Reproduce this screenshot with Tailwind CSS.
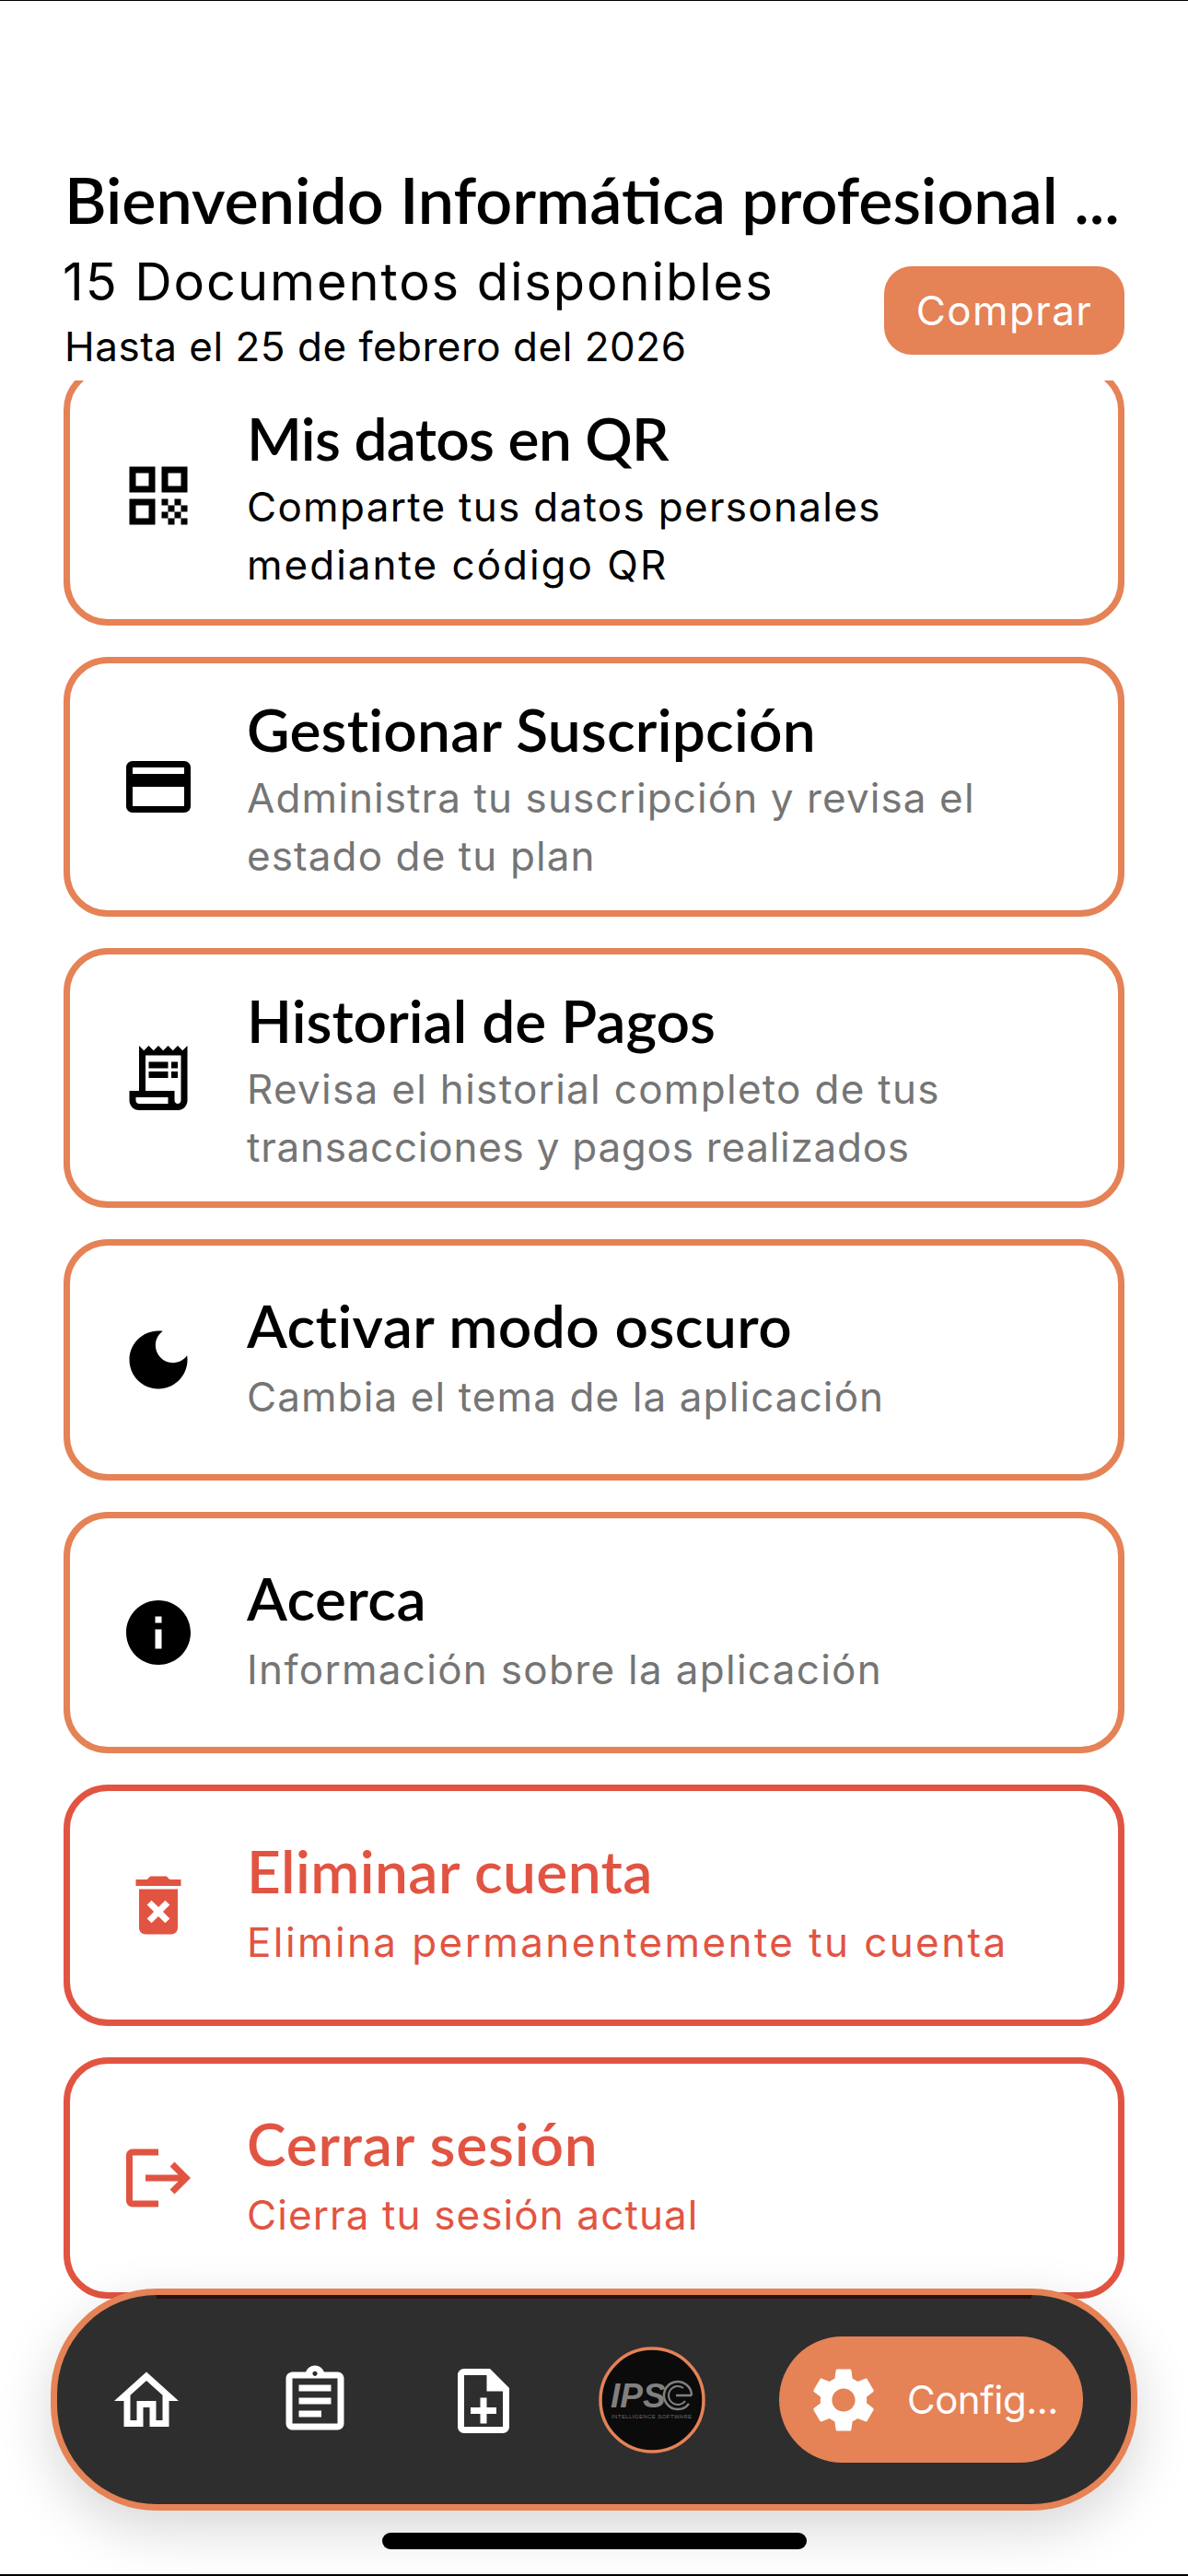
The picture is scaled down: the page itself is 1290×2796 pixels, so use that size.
<!DOCTYPE html>
<html lang="es">
<head>
    <meta charset="UTF-8">
    <meta name="viewport" content="width=1290">
    <title>Configuración</title>
    <script src="https://cdn.jsdelivr.net/npm/@tailwindcss/browser@4"></script>
</head>
<body class="bg-white">
    <div class="relative w-[1290px] h-[2796px] overflow-hidden bg-white border-t border-b-2 border-black flex flex-col">
      <!-- Header -->
      <header class="h-[412px] shrink-0 pl-[70px] pr-[69px] pt-[175px]">
        <h1 class="font-[Lato,sans-serif] font-semibold text-[70px] leading-[80px] text-black whitespace-nowrap">Bienvenido Informática profesional ...</h1>
        <div class="flex justify-between items-start">
          <div class="font-[Inter,sans-serif] text-black">
            <p class="mt-[16px] text-[56px] leading-[68px] -ml-[2px] tracking-[1.9px]">15 Documentos disponibles</p>
            <p class="mt-[9px] text-[44px] leading-[54px] tracking-[0.5px]">Hasta el 25 de febrero del 2026</p>
          </div>
          <button class="mt-[33px] w-[261px] h-[96px] rounded-[30px] bg-[#e58256] text-white font-[Inter,sans-serif] text-[44px] tracking-[1.4px]">Comprar</button>
        </div>
      </header>

      <!-- Option list -->
      <main class="flex-1 overflow-hidden px-[69px]">
        <div class="flex flex-col gap-[34px] -mt-[16px]">
          <a class="flex items-center h-[282px] border-[7px] border-[#e58256] rounded-[48px] pl-[54px]">
            <svg class="w-[84px] h-[84px] shrink-0" viewBox="0 0 24 24" fill="#000"><path d="M3 11h8V3H3v8zm2-6h4v4H5V5zM3 21h8v-8H3v8zm2-6h4v4H5v-4zM13 3v8h8V3h-8zm6 6h-4V5h4v4zM19 19h2v2h-2zM13 13h2v2h-2zM15 15h2v2h-2zM13 17h2v2h-2zM15 19h2v2h-2zM17 17h2v2h-2zM17 13h2v2h-2zM19 15h2v2h-2z"/></svg>
            <div class="ml-[54px] pt-[9px]">
              <h2 class="font-[Lato,sans-serif] font-semibold text-[64px] leading-[72px] tracking-[-0.7px] mb-[7px] text-black">Mis datos en QR</h2>
              <p class="font-[Inter,sans-serif] text-[44px] leading-[63px] tracking-[1.3px] text-black">Comparte tus datos personales<br><span class="tracking-[2px]">mediante código QR</span></p>
            </div>
          </a>

          <a class="flex items-center h-[282px] border-[7px] border-[#e58256] rounded-[48px] pl-[54px]">
            <svg class="w-[84px] h-[84px] shrink-0" viewBox="0 0 24 24" fill="#000"><path d="M20 4H4c-1.11 0-1.99.89-1.99 2L2 18c0 1.11.89 2 2 2h16c1.11 0 2-.89 2-2V6c0-1.11-.89-2-2-2zm0 14H4v-6h16v6zm0-10H4V6h16v2z"/></svg>
            <div class="ml-[54px] pt-[9px]">
              <h2 class="font-[Lato,sans-serif] font-semibold text-[64px] leading-[72px] tracking-[0.2px] mb-[7px] text-black">Gestionar Suscripción</h2>
              <p class="font-[Inter,sans-serif] text-[44px] leading-[63px] tracking-[1.1px] text-[#757575]">Administra tu suscripción y revisa el<br>estado de tu plan</p>
            </div>
          </a>

          <a class="flex items-center h-[282px] border-[7px] border-[#e58256] rounded-[48px] pl-[54px]">
            <svg class="w-[84px] h-[84px] shrink-0" viewBox="0 0 24 24" fill="#000"><path d="M19.5 3.5L18 2l-1.5 1.5L15 2l-1.5 1.5L12 2l-1.5 1.5L9 2 7.5 3.5 6 2v14H3v3c0 1.66 1.34 3 3 3h12c1.66 0 3-1.34 3-3V2l-1.5 1.5zM15 20H6c-.55 0-1-.45-1-1v-1h10v2zm4-1c0 .55-.45 1-1 1s-1-.45-1-1v-3H8V5h11v14z"/><path d="M9 7h6v2H9zm7 0h2v2h-2zM9 10h6v2H9zm7 0h2v2h-2z"/></svg>
            <div class="ml-[54px] pt-[9px]">
              <h2 class="font-[Lato,sans-serif] font-semibold text-[64px] leading-[72px] mb-[7px] text-black">Historial de Pagos</h2>
              <p class="font-[Inter,sans-serif] text-[44px] leading-[63px] tracking-[1.3px] text-[#757575]">Revisa el historial completo de tus<br><span class="tracking-[0.75px]">transacciones y pagos realizados</span></p>
            </div>
          </a>

          <a class="flex items-center h-[262px] border-[7px] border-[#e58256] rounded-[48px] pl-[54px]">
            <svg class="w-[84px] h-[84px] shrink-0" viewBox="0 0 24 24" fill="#000"><path d="M12 3c-4.97 0-9 4.03-9 9s4.03 9 9 9 9-4.03 9-9c0-.46-.04-.92-.1-1.36-.98 1.37-2.58 2.26-4.4 2.26-2.98 0-5.4-2.42-5.4-5.4 0-1.81.89-3.42 2.26-4.4-.44-.06-.9-.1-1.36-.1z"/></svg>
            <div class="ml-[54px] pb-[1px]">
              <h2 class="font-[Lato,sans-serif] font-semibold text-[64px] leading-[72px] tracking-[0.4px] mb-[10px] text-black">Activar modo oscuro</h2>
              <p class="font-[Inter,sans-serif] text-[44px] leading-[63px] tracking-[1.1px] text-[#757575]">Cambia el tema de la aplicación</p>
            </div>
          </a>

          <a class="flex items-center h-[262px] border-[7px] border-[#e58256] rounded-[48px] pl-[54px]">
            <svg class="w-[84px] h-[84px] shrink-0" viewBox="0 0 24 24" fill="#000"><path d="M12 2C6.48 2 2 6.48 2 12s4.48 10 10 10 10-4.48 10-10S17.52 2 12 2zm1 15h-2v-6h2v6zm0-8h-2V7h2v2z"/></svg>
            <div class="ml-[54px] pb-[1px]">
              <h2 class="font-[Lato,sans-serif] font-semibold text-[64px] leading-[72px] tracking-[0.4px] mb-[10px] text-black">Acerca</h2>
              <p class="font-[Inter,sans-serif] text-[44px] leading-[63px] tracking-[1.3px] text-[#757575]">Información sobre la aplicación</p>
            </div>
          </a>

          <a class="flex items-center h-[262px] border-[7px] border-[#e25442] rounded-[48px] pl-[54px]">
            <svg class="w-[84px] h-[84px] shrink-0" viewBox="0 0 24 24" fill="#e25442"><path d="M6 19c0 1.1.9 2 2 2h8c1.1 0 2-.9 2-2V7H6v12zm2.46-7.12 1.41-1.41L12 12.59l2.12-2.12 1.41 1.41L13.41 14l2.12 2.12-1.41 1.41L12 15.41l-2.12 2.12-1.41-1.41L10.59 14l-2.13-2.12zM15.5 4l-1-1h-5l-1 1H5v2h14V4z"/></svg>
            <div class="ml-[54px] pb-[1px]">
              <h2 class="font-[Lato,sans-serif] font-semibold text-[64px] leading-[72px] tracking-[0.4px] mb-[10px] text-[#e25442]">Eliminar cuenta</h2>
              <p class="font-[Inter,sans-serif] text-[44px] leading-[63px] tracking-[2.4px] text-[#e25442]">Elimina permanentemente tu cuenta</p>
            </div>
          </a>

          <a class="flex items-center h-[262px] border-[7px] border-[#e25442] rounded-[48px] pl-[54px]">
            <svg class="w-[84px] h-[84px] shrink-0" viewBox="0 0 24 24" fill="#e25442"><path d="M17 7l-1.41 1.41L18.17 11H8v2h10.17l-2.58 2.58L17 17l5-5zM4 5h8V3H4c-1.1 0-2 .9-2 2v14c0 1.1.89 2 2 2h8v-2H4V5z"/></svg>
            <div class="ml-[54px] pb-[1px]">
              <h2 class="font-[Lato,sans-serif] font-semibold text-[64px] leading-[72px] tracking-[0.8px] mb-[10px] text-[#e25442]">Cerrar sesión</h2>
              <p class="font-[Inter,sans-serif] text-[44px] leading-[63px] tracking-[1.1px] text-[#e25442]">Cierra tu sesión actual</p>
            </div>
          </a>
        </div>
      </main>

      <!-- Floating bottom nav -->
      <nav class="absolute left-[55px] top-[2483px] w-[1180px] h-[241px] rounded-[115px] border-[7px] border-[#e58256] bg-[#2e2e2e] shadow-[0_20px_60px_rgba(0,0,0,0.16)] flex items-center pl-[55px]">
        <div class="absolute left-[108px] right-[108px] top-0 h-[4px] bg-[#241510]"></div>
        <svg class="w-[84px] h-[84px] shrink-0 mt-[2px]" viewBox="0 0 24 24" fill="#fff"><path d="M12 5.69l5 4.5V18h-2v-6H9v6H7v-7.81l5-4.5M12 3L2 12h3v8h6v-6h2v6h6v-8h3L12 3z"/></svg>
        <svg class="w-[84px] h-[84px] shrink-0 ml-[99px] mt-[2px]" viewBox="0 0 24 24" fill="#fff"><path d="M7 15h7v2H7zm0-4h10v2H7zm0-4h10v2H7zm12-4h-4.18C14.4 1.84 13.3 1 12 1c-1.3 0-2.4.84-2.82 2H5c-.14 0-.27.01-.4.04-.39.08-.74.28-1.01.55-.18.18-.33.4-.43.64-.1.23-.16.49-.16.77v14c0 .27.06.54.16.78s.25.45.43.64c.27.27.62.47 1.01.55.13.02.26.03.4.03h14c1.1 0 2-.9 2-2V5c0-1.1-.9-2-2-2zm-7-.25c.41 0 .75.34.75.75s-.34.75-.75.75-.75-.34-.75-.75.34-.75.75-.75zM19 19H5V5h14v14z"/></svg>
        <svg class="w-[84px] h-[84px] shrink-0 ml-[99px] mt-[2px]" viewBox="0 0 24 24" fill="#fff"><path d="M14 2H6c-1.1 0-2 .9-2 2v16c0 1.1.89 2 1.99 2H18c1.1 0 2-.9 2-2V8l-6-6zm4 18H6V4h7v5h5v11z"/><path d="M13 11h-2v3H8v2h3v3h2v-3h3v-2h-3z"/></svg>
        <!-- IPS logo -->
        <svg class="w-[116px] h-[116px] shrink-0 ml-[83px] mt-[1px]" viewBox="0 0 116 116">
          <circle cx="58" cy="58" r="56" fill="#0b0b0b" stroke="#e58256" stroke-width="3.5"/>
          <text x="13" y="66" font-family="Liberation Sans, sans-serif" font-size="37" font-weight="700" font-style="italic" fill="#808080">IPS</text>
          <path d="M101 53A15 15 0 1 0 98 62" fill="none" stroke="#808080" stroke-width="2.5"/>
          <path d="M92 45A10 10 0 1 0 94 59" fill="none" stroke="#808080" stroke-width="2"/>
          <path d="M84 53H101" fill="none" stroke="#808080" stroke-width="2.5"/>
          <text x="14" y="78" font-family="Liberation Sans, sans-serif" font-size="6" fill="#6e6e6e" textLength="87">INTELLIGENCE SOFTWARE</text>
        </svg>
        <a class="ml-[80px] w-[330px] h-[137px] rounded-full bg-[#e58256] flex items-center pl-[28px] text-white">
          <svg class="w-[84px] h-[84px] shrink-0" viewBox="0 0 24 24" fill="#fff"><path d="M19.14 12.94c.04-.3.06-.61.06-.94 0-.32-.02-.64-.07-.94l2.03-1.58c.18-.14.23-.41.12-.61l-1.92-3.32c-.12-.22-.37-.29-.59-.22l-2.39.96c-.5-.38-1.03-.7-1.62-.94l-.36-2.54c-.04-.24-.24-.41-.48-.41h-3.84c-.24 0-.43.17-.47.41l-.36 2.54c-.59.24-1.13.57-1.62.94l-2.39-.96c-.22-.08-.47 0-.59.22L2.74 8.87c-.12.21-.08.47.12.61l2.03 1.58c-.05.3-.09.63-.09.94s.02.64.07.94l-2.03 1.58c-.18.14-.23.41-.12.61l1.92 3.32c.12.22.37.29.59.22l2.39-.96c.5.38 1.03.7 1.62.94l.36 2.54c.05.24.24.41.48.41h3.84c.24 0 .44-.17.47-.41l.36-2.54c.59-.24 1.13-.56 1.62-.94l2.39.96c.22.08.47 0 .59-.22l1.92-3.32c.12-.22.07-.47-.12-.61l-2.01-1.58zM12 15.6c-1.98 0-3.6-1.62-3.6-3.6s1.62-3.6 3.6-3.6 3.6 1.62 3.6 3.6-1.62 3.6-3.6 3.6z"/></svg>
          <span class="ml-[27px] font-[Inter,sans-serif] text-[42px] tracking-[-0.5px] whitespace-nowrap">Config...</span>
        </a>
      </nav>

      <!-- Home indicator -->
      <div class="absolute left-[415px] top-[2748px] w-[461px] h-[18px] rounded-full bg-black"></div>
    </div>
</body>
</html>
